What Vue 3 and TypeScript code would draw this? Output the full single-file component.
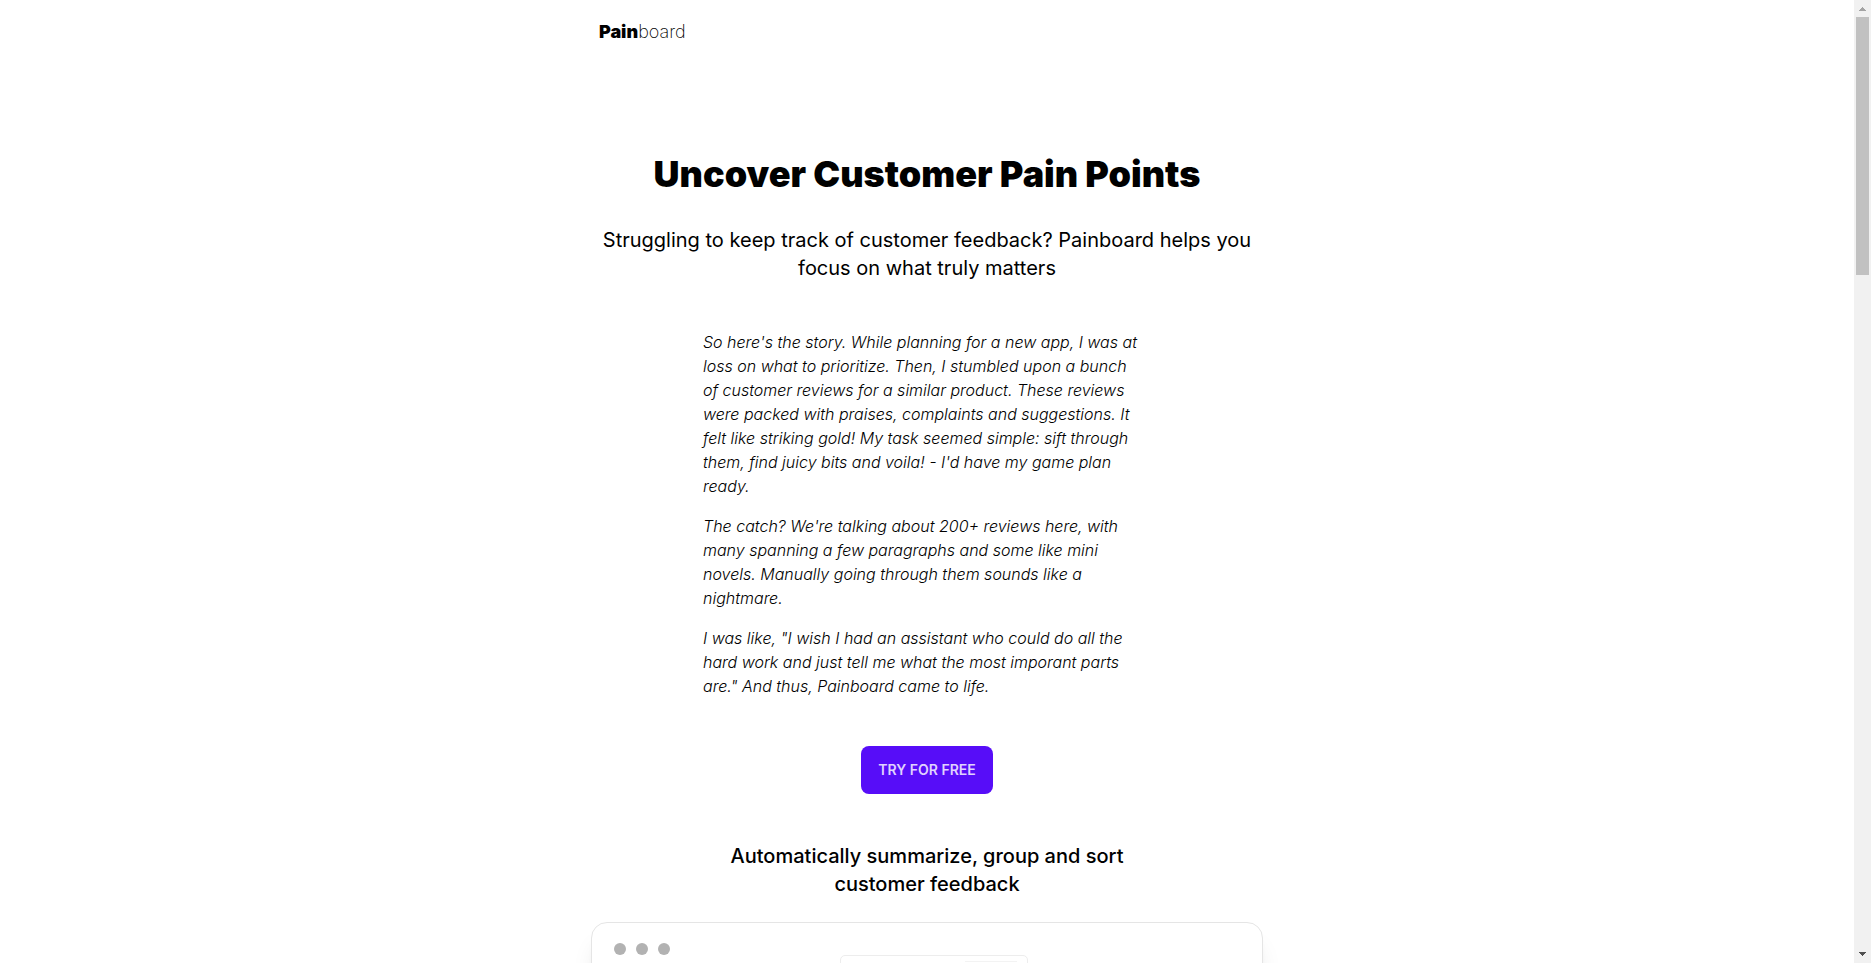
<script setup lang="ts">
const story: string[] = [
  "So here's the story. While planning for a new app, I was at loss on what to prioritize. Then, I stumbled upon a bunch of customer reviews for a similar product. These reviews were packed with praises, complaints and suggestions. It felt like striking gold! My task seemed simple: sift through them, find juicy bits and voila! - I'd have my game plan ready.",
  "The catch? We're talking about 200+ reviews here, with many spanning a few paragraphs and some like mini novels. Manually going through them sounds like a nightmare.",
  'I was like, "I wish I had an assistant who could do all the hard work and just tell me what the most imporant parts are." And thus, Painboard came to life.',
]
</script>

<template>
  <div class="page">
    <div class="content">
      <header class="header">
        <a class="logo" href="#"><b>Pain</b>board</a>
      </header>
      <main class="main">
        <h1 class="title">Uncover Customer Pain Points</h1>
        <p class="subtitle">
          Struggling to keep track of customer feedback? Painboard helps you focus on what truly matters
        </p>
        <div class="story">
          <p v-for="(paragraph, i) in story" :key="i">{{ paragraph }}</p>
        </div>
        <button class="cta" type="button">TRY FOR FREE</button>
        <h2 class="feature">Automatically summarize, group and sort customer feedback</h2>
        <section class="window">
          <div class="dots"><i></i><i></i><i></i></div>
          <div class="board">
            <div class="panel"><div class="chip"></div></div>
          </div>
        </section>
      </main>
    </div>
    <div class="scrollbar" aria-hidden="true">
      <svg class="arrow" viewBox="0 0 17 17" shape-rendering="crispEdges">
        <path d="M8 7h1v1h1v1h1v1h1v1H5v-1h1V9h1V8h1z" fill="#a3a3a3" />
      </svg>
      <div class="track"><div class="thumb"></div></div>
      <svg class="arrow" viewBox="0 0 17 17" shape-rendering="crispEdges">
        <path d="M5 6h7v1h-1v1h-1v1H9v1H8V9H7V8H6V7H5z" fill="#505050" />
      </svg>
    </div>
  </div>
</template>

<style>
body {
  margin: 0;
  background: #fff;
}
</style>

<style scoped>
.page {
  display: flex;
  height: 100vh;
  overflow: hidden;
  color: #000;
  font-family: Inter, "Liberation Sans", sans-serif;
}
.content {
  flex: 1;
  min-width: 0;
  overflow: hidden;
}
.header,
.main {
  box-sizing: border-box;
  max-width: 672px;
  margin: 0 auto;
}
.header {
  display: flex;
  align-items: center;
  height: 64px;
  padding: 0 8px;
}
.logo {
  color: inherit;
  font-size: 18px;
  font-weight: 200;
  line-height: 28px;
  text-decoration: none;
}
.logo b {
  font-weight: 900;
}
.main {
  display: flex;
  flex-direction: column;
  align-items: center;
  padding-top: 90px;
  text-align: center;
}
.title {
  margin: 0;
  font-size: 36px;
  font-weight: 900;
  line-height: 40px;
}
.subtitle {
  margin: 32px 0 48px;
  padding: 0 8px;
  font-size: 20px;
  font-weight: 400;
  line-height: 28px;
}
.story {
  box-sizing: border-box;
  display: grid;
  gap: 16px;
  max-width: 448px;
  padding-right: 8px;
  font-size: 16px;
  font-style: italic;
  font-weight: 300;
  line-height: 24px;
  text-align: left;
}
.story p {
  margin: 0;
}
.cta {
  height: 48px;
  margin: 48px 0;
  padding: 0 17px;
  border: 0;
  border-radius: 8px;
  background: #570df8;
  color: #e0d2fe;
  font: 600 14px/16px Inter, sans-serif;
}
.feature {
  max-width: 448px;
  margin: 0 0 24px;
  font-size: 20px;
  font-weight: 500;
  line-height: 28px;
}
.window {
  box-sizing: border-box;
  width: 100%;
  height: 480px;
  padding: 20px 22px;
  border: 1px solid #e5e5e5;
  border-radius: 16px;
  box-shadow: 0 20px 25px -5px rgba(0, 0, 0, 0.1), 0 8px 10px -6px rgba(0, 0, 0, 0.1);
}
.dots {
  display: flex;
  gap: 10px;
}
.dots i {
  width: 12px;
  height: 12px;
  border-radius: 50%;
  background: #b2b2b2;
}
.board {
  padding-left: 14px;
}
.panel {
  box-sizing: border-box;
  width: 188px;
  height: 200px;
  margin: 0 auto;
  padding: 5px 10px;
  border: 1px solid #ededed;
  border-radius: 5px;
}
.chip {
  width: 52px;
  height: 20px;
  margin-left: auto;
  border-top: 1px solid #f3f3f3;
}
.scrollbar {
  display: flex;
  flex-direction: column;
  width: 17px;
  background: #f1f1f1;
}
.arrow {
  display: block;
  width: 17px;
  height: 17px;
}
.track {
  flex: 1;
  padding: 0 2px;
}
.thumb {
  height: 258px;
  background: #c1c1c1;
}
</style>
